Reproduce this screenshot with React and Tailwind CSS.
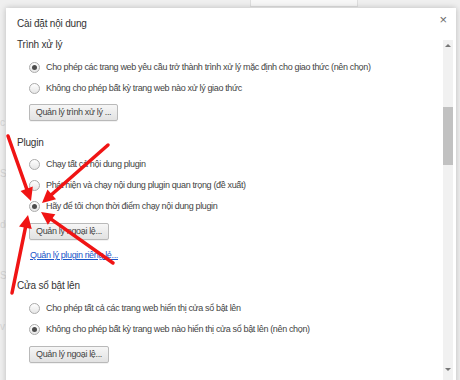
import React from "react";

function Radio({ checked }) {
  return (
    <span className="w-[11px] h-[11px] rounded-full border border-[#ababab] bg-gradient-to-b from-[#ffffff] to-[#e6e6e6] flex items-center justify-center shrink-0">
      {checked && <span className="w-[5px] h-[5px] rounded-full bg-[#4d4d4d]" />}
    </span>
  );
}

function Row({ checked, children, mt }) {
  return (
    <div className={`flex items-center h-[21px] pl-[12px] gap-[6px] ${mt || ""}`}>
      <Radio checked={checked} />
      <span className="whitespace-nowrap">{children}</span>
    </div>
  );
}

function Btn({ children, w, mt }) {
  return (
    <div className={`ml-[12px] ${mt} h-[17px] ${w} flex items-center justify-center rounded-[2px] border border-[#b9b9b9] bg-gradient-to-b from-[#f6f6f6] to-[#e2e2e2] text-[#444] shadow-[0_1px_0_rgba(0,0,0,0.05)] whitespace-nowrap`}>
      {children}
    </div>
  );
}

function Heading({ children, mt }) {
  return (
    <div className={`${mt} h-[16px] leading-[16px] text-[10px] tracking-[-0.2px] text-[#333]`}>{children}</div>
  );
}

function Arrow({ x1, y1, x2, y2 }) {
  const dx = x2 - x1;
  const dy = y2 - y1;
  const L = Math.hypot(dx, dy);
  const ux = dx / L;
  const uy = dy / L;
  const hl = 13;
  const hw = 6.5;
  const bx = x2 - ux * hl;
  const by = y2 - uy * hl;
  const px = -uy;
  const py = ux;
  const pts = `${x2},${y2} ${bx + px * hw},${by + py * hw} ${bx - px * hw},${by - py * hw}`;
  return (
    <g>
      <line x1={x1} y1={y1} x2={bx + ux * 2} y2={by + uy * 2} stroke="#f01414" strokeWidth="3.5" strokeLinecap="round" />
      <polygon points={pts} fill="#f01414" />
    </g>
  );
}

export default function App() {
  const arrows = [
    [8, 136, 31, 201],
    [108, 145, 42, 203],
    [113, 263, 41, 212],
    [12, 293, 28, 215],
  ];
  return (
    <div
      className="relative w-[460px] h-[380px] overflow-hidden bg-[#efefef] text-[9px] tracking-[-0.35px] text-[#444]"
      style={{ fontFamily: '"Liberation Sans", Arial, sans-serif' }}
    >
      {/* background page */}
      <div className="flex flex-col">
        <div className="ml-[250px] w-[108px] h-[7px] border border-t-0 border-[#dedede] bg-[#f7f7f7]" />
        <div className="flex flex-col gap-[36px] mt-[108px] text-[#d6d6d6] text-[10px]">
          <span>c</span>
          <span>S</span>
          <span>dc</span>
          <span>S</span>
          <span>v</span>
        </div>
      </div>

      {/* dialog */}
      <div className="absolute left-[6px] top-[8px] w-[450px] h-[400px] bg-white shadow-[0_0_6px_rgba(0,0,0,0.22)] flex flex-col">
        <div className="h-[28px] flex items-start justify-between pl-[11px] pr-[9px] pt-[8px]">
          <Heading mt="mt-0">Cài đặt nội dung</Heading>
          <div className="text-[13px] leading-[13px] mt-[-3px] text-[#6b6b6b] tracking-normal">×</div>
        </div>
        <div className="flex flex-1">
          <div className="flex-1 flex flex-col pl-[11px]">
            <Heading mt="mt-[1px]">Trình xử lý</Heading>
            <Row checked mt="mt-[4px]">Cho phép các trang web yêu cầu trở thành trình xử lý mặc định cho giao thức (nên chọn)</Row>
            <Row>Không cho phép bất kỳ trang web nào xử lý giao thức</Row>
            <Btn w="w-[89px]" mt="mt-[5px]">Quản lý trình xử lý ...</Btn>

            <Heading mt="mt-[14px]">Plugin</Heading>
            <Row mt="mt-[3px]">Chạy tất cả nội dung plugin</Row>
            <Row>Phát hiện và chạy nội dung plugin quan trọng (đề xuất)</Row>
            <Row checked>Hãy để tôi chọn thời điểm chạy nội dung plugin</Row>
            <Btn w="w-[80px]" mt="mt-[6px]">Quản lý ngoại lệ...</Btn>
            <div className="mt-[7px] ml-[13px] h-[16px] leading-[16px] text-[#1a56c9] underline">Quản lý plugin riêng lẻ...</div>

            <Heading mt="mt-[15px]">Cửa sổ bật lên</Heading>
            <Row mt="mt-[4px]">Cho phép tất cả các trang web hiển thị cửa sổ bật lên</Row>
            <Row checked>Không cho phép bất kỳ trang web nào hiển thị cửa sổ bật lên (nên chọn)</Row>
            <Btn w="w-[80px]" mt="mt-[6px]">Quản lý ngoại lệ...</Btn>
          </div>
          <div className="w-[10px] mr-[3px] mt-[4px] bg-[#f1f1f1] flex flex-col items-center">
            <div className="h-[10px] flex items-center justify-center">
              <div className="w-0 h-0 border-l-[3px] border-r-[3px] border-b-[3px] border-l-transparent border-r-transparent border-b-[#777]" />
            </div>
            <div className="mt-[57px] w-[10px] h-[58px] bg-[#c1c1c1]" />
            <div className="mt-[199px] h-[10px] flex items-center justify-center">
              <div className="w-0 h-0 border-l-[3px] border-r-[3px] border-t-[3px] border-l-transparent border-r-transparent border-t-[#777]" />
            </div>
          </div>
        </div>
      </div>

      {/* arrows */}
      <svg className="absolute left-0 top-0 pointer-events-none" width="460" height="380" viewBox="0 0 460 380">
        {arrows.map((a, i) => (
          <Arrow key={i} x1={a[0]} y1={a[1]} x2={a[2]} y2={a[3]} />
        ))}
      </svg>
    </div>
  );
}
